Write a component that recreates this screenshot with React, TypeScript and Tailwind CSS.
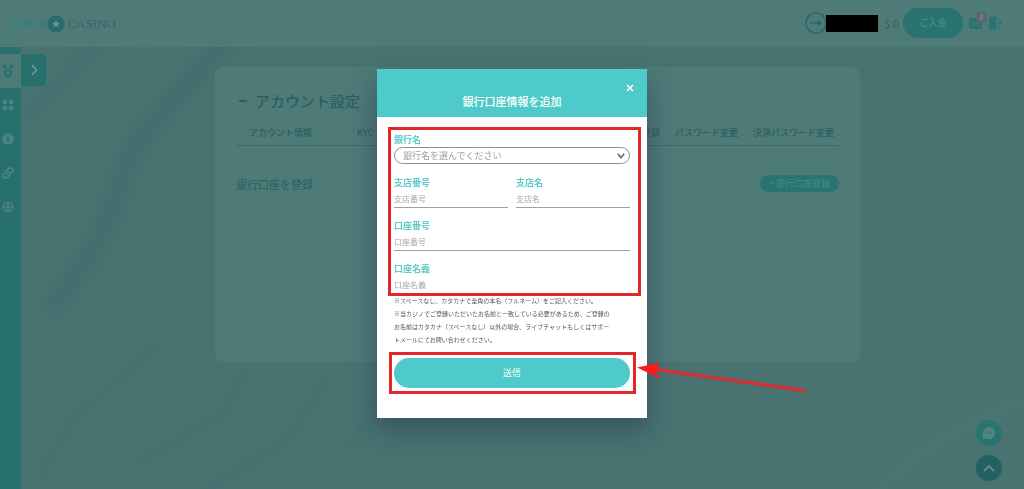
import { useState } from "react";
import type { IconType } from "react-icons";
import { FaGlobe, FaInfoCircle, FaLink, FaMedal } from "react-icons/fa";
import { BsFillGridFill } from "react-icons/bs";

const SIDE_LINKS: { label: string; icon: IconType }[] = [
  { label: "ゲーム", icon: BsFillGridFill },
  { label: "インフォメーション", icon: FaInfoCircle },
  { label: "アフィリエイト", icon: FaLink },
  { label: "言語", icon: FaGlobe },
];

const LEFT_TABS = ["アカウント情報", "KYC"];
const RIGHT_TABS = ["銀行口座登録", "パスワード変更", "決済パスワード変更"];

const NOTES = [
  "※スペースなし、カタカナで全角の本名（フルネーム）をご記入ください。",
  "※当カジノでご登録いただいたお名前と一致している必要があるため、ご登録の",
  "お名前はカタカナ（スペースなし）以外の場合、ライブチャットもしくはサポー",
  "トメールにてお問い合わせください。",
];

function Marble() {
  return (
    <svg
      aria-hidden="true"
      viewBox="0 0 1024 442"
      preserveAspectRatio="none"
      className="absolute inset-0 h-full w-full"
      fill="none"
    >
      <defs>
        <filter id="soft" x="-20%" y="-20%" width="140%" height="140%">
          <feGaussianBlur stdDeviation="7" />
        </filter>
        <filter id="vein" x="-20%" y="-20%" width="140%" height="140%">
          <feGaussianBlur stdDeviation="3" />
        </filter>
      </defs>
      <g filter="url(#soft)" stroke="#40696a" opacity="0.5">
        <path d="M100 -10 C70 30 50 50 25 70" strokeWidth="10" />
        <path d="M230 -10 C190 40 135 80 122 130 S90 210 50 265" strokeWidth="20" />
      </g>
      <g filter="url(#vein)" stroke="#40696a" opacity="0.4">
        <path d="M160 295 L70 375 L40 430" strokeWidth="5" />
        <path d="M245 325 L225 365 L140 415" strokeWidth="5" />
        <path d="M330 325 L290 390 L205 445" strokeWidth="6" />
        <path d="M385 345 L350 400" strokeWidth="5" />
      </g>
      <g filter="url(#soft)" stroke="#4d7876" opacity="0.4">
        <path d="M150 -10 C120 50 80 90 25 170" strokeWidth="10" />
        <path d="M1030 350 C960 380 920 400 870 450" strokeWidth="20" />
      </g>
    </svg>
  );
}

function Logo() {
  return (
    <a href="#" className="flex items-center gap-[2px] font-['Liberation_Serif',serif] text-[13px] leading-4">
      <span className="text-[#278480]">YOUS</span>
      <svg viewBox="0 0 18 18" className="h-[18px] w-[18px]">
        <circle cx="9" cy="9" r="8.5" fill="#28686a" />
        <circle cx="9" cy="9" r="6.4" fill="none" stroke="#3a7d7b" strokeWidth="0.6" />
        <path d="M9 5 L10.2 7.6 L13 8 L11 9.9 L11.5 12.7 L9 11.3 L6.5 12.7 L7 9.9 L5 8 L7.8 7.6 Z" fill="#5d9793" />
      </svg>
      <span className="text-[#45606a]">CASINO</span>
    </a>
  );
}

function TopBar() {
  return (
    <header className="relative z-10 flex h-[47px] items-center justify-between bg-[#4e7a78] pl-[10px] pr-[22px]">
      <Logo />
      <div className="flex items-center pb-px">
        <svg viewBox="0 0 22 22" className="h-[22px] w-[22px]" fill="none" stroke="#2f6668">
          <circle cx="11" cy="11" r="10" strokeWidth="1.6" />
          <path d="M5 11 h7" strokeWidth="1.4" />
          <circle cx="14" cy="11" r="2.2" fill="#2f6668" stroke="none" />
        </svg>
        <div className="-ml-px h-[17px] w-[52px] bg-black" />
        <span className="ml-[6px] text-[11px] leading-4 text-[#2f5f60]">$ 0</span>
        <button type="button" className="ml-1 h-[30px] w-[60px] rounded-full bg-[#297370] text-[9px] text-[#5b918e]">
          ご入金
        </button>
        <button type="button" aria-label="メッセージ" className="relative ml-[6px]">
          <svg viewBox="0 0 13 11" className="h-[11px] w-[13px]">
            <rect width="13" height="11" rx="1" fill="#297370" />
            <path d="M2 3 L6.500 6.500 L11 3 M2 8.500 L4.500 6 M11 8.500 L8.500 6" fill="none" stroke="#4e7a78" />
          </svg>
          <span className="absolute -right-[5px] -top-[6px] flex h-[11px] w-[11px] items-center justify-center rounded-full bg-[#5f6273] text-[7px] leading-none text-[#8aa0a5]">
            0
          </span>
        </button>
        <button type="button" aria-label="ログアウト" className="ml-[7px]">
          <svg viewBox="0 0 13 14" className="h-[14px] w-[13px]" fill="#297370">
            <path d="M0 1.500 L7 0 V14 L0 12.500 Z" />
            <path d="M7 2 H10 V4.500 H9 V3 H7 Z M7 11 H9 V9.500 H10 V12 H7 Z" />
            <path d="M8.500 6.300 H11 V5 L13 7 L11 9 V7.700 H8.500 Z" />
          </svg>
        </button>
      </div>
    </header>
  );
}

function SideBar() {
  return (
    <aside className="relative z-10 w-[21px] shrink-0 bg-[#27706c] pt-[7px]">
      <nav className="flex flex-col">
        <a href="#" aria-label="VIP" className="flex h-[34px] items-center justify-center bg-[#4e7a78] pr-[5px]">
          <FaMedal className="h-3 w-3 text-[#27706c]" />
        </a>
        {SIDE_LINKS.map(({ label, icon: Icon }) => (
          <a key={label} href="#" aria-label={label} className="flex h-[34px] items-center justify-center pr-[5px]">
            <Icon className="h-3 w-3 text-[#4a8380]" />
          </a>
        ))}
      </nav>
      <button
        type="button"
        aria-label="メニューを開く"
        className="absolute left-full top-[7px] flex h-8 w-[25px] items-center justify-center rounded-r-[4px] bg-[#27706c]"
      >
        <svg viewBox="0 0 8 12" className="h-3 w-2" fill="none" stroke="#6f9c99" strokeWidth="1.6">
          <path d="M2 1 L6.500 6 L2 11" />
        </svg>
      </button>
    </aside>
  );
}

function AccountCard() {
  return (
    <section className="relative min-h-[295px] rounded-lg bg-[#4e7a78] px-[21px] pt-[23px] text-[#2f5f60]">
      <h1 className="flex items-center gap-2 pl-[3px] text-[15px] font-medium leading-[22px]">
        <span className="h-[2px] w-2 bg-[#2f5f60]" />
        アカウント設定
      </h1>
      <nav className="mt-[13px] flex justify-between border-b border-[#3c6a69] pb-1 pl-[13px] pr-[5px] text-[9px] font-medium leading-4">
        <div className="flex gap-[45px]">
          {LEFT_TABS.map((tab) => (
            <a key={tab} href="#">
              {tab}
            </a>
          ))}
        </div>
        <div className="flex gap-[15px]">
          {RIGHT_TABS.map((tab) => (
            <a key={tab} href="#">
              {tab}
            </a>
          ))}
        </div>
      </nav>
      <div className="mt-[29px] flex items-center justify-between">
        <h2 className="text-[11px] leading-4">銀行口座を登録</h2>
        <button type="button" className="h-[17px] w-[79px] rounded-full bg-[#297370] text-[9px] leading-none text-[#4b8885]">
          + 銀行口座登録
        </button>
      </div>
    </section>
  );
}

function TextField({ id, label }: { id: string; label: string }) {
  const [value, setValue] = useState("");
  return (
    <div className="flex min-w-0 flex-1 flex-col">
      <label htmlFor={id} className="text-[9px] font-bold leading-3 text-[#5fcbc8]">
        {label}
      </label>
      <input
        id={id}
        type="text"
        value={value}
        placeholder={label}
        onChange={(e) => setValue(e.target.value)}
        className="h-[19px] w-full border-b border-[#a0a0a0] text-[8px] text-[#555] outline-none placeholder:text-[#a8a8a8]"
      />
    </div>
  );
}

function BankModal() {
  return (
    <div
      role="dialog"
      aria-modal="true"
      aria-labelledby="bank-title"
      className="relative w-[270px] bg-white shadow-[0_12px_24px_0_rgba(50,74,86,0.75)]"
    >
      <div className="relative flex h-12 items-end justify-center bg-[#4ecaca] pb-2 text-white">
        <h2 id="bank-title" className="text-[11px] font-medium leading-4">
          銀行口座情報を追加
        </h2>
        <button type="button" aria-label="閉じる" className="absolute right-[13px] top-[15px]">
          <svg viewBox="0 0 8 8" className="h-2 w-2" stroke="white" strokeWidth="1.6">
            <path d="M1 1 L7 7 M7 1 L1 7" />
          </svg>
        </button>
      </div>

      <form className="px-[17px] pb-[30px] pt-[17px]" onSubmit={(e) => e.preventDefault()}>
        <div className="flex flex-col gap-3">
          <div className="flex flex-col">
            <label htmlFor="bank" className="text-[9px] font-bold leading-3 text-[#5fcbc8]">
              銀行名
            </label>
            <div className="relative my-px">
              <select
                id="bank"
                defaultValue=""
                className="block h-[17px] w-full appearance-none rounded-full border border-[#8f8f8f] bg-white pl-2 text-[9px] leading-none text-[#a0a0a0] outline-none"
              >
                <option value="">銀行名を選んでください</option>
              </select>
              <svg
                viewBox="0 0 8 6"
                className="pointer-events-none absolute right-[5px] top-[6px] h-[6px] w-2"
                fill="none"
                stroke="#6f6f6f"
                strokeWidth="1.7"
              >
                <path d="M0.800 0.800 L4 4.600 L7.200 0.800" />
              </svg>
            </div>
          </div>
          <div className="flex gap-2">
            <TextField id="branch-code" label="支店番号" />
            <TextField id="branch-name" label="支店名" />
          </div>
          <TextField id="account-number" label="口座番号" />
          <TextField id="account-holder" label="口座名義" />
        </div>
        <p className="whitespace-nowrap text-[6px] leading-[13px] text-[#555]">
          {NOTES.map((line) => (
            <span key={line} className="block">
              {line}
            </span>
          ))}
        </p>
        <button type="submit" className="mt-3 block h-[30px] w-full rounded-full bg-[#4ecaca] text-[9px] text-white">
          送信
        </button>
      </form>

      {/* guide marks: form fields, submit button, pointer */}
      <div className="pointer-events-none absolute left-[11px] top-[58px] h-[169px] w-[253px] border-3 border-[#e3262a]" />
      <div className="pointer-events-none absolute left-[12px] top-[283px] h-[42px] w-[247px] border-3 border-[#e3262a]" />
      <svg viewBox="0 0 172 34" className="pointer-events-none absolute left-[259px] top-[291px] h-[34px] w-[172px]">
        <path d="M16 9 L169 30.500" stroke="#d23233" strokeWidth="3.400" />
        <path d="M1 7.500 L24.500 2.500 L20 10 L23 18 Z" fill="#ff1a1a" />
      </svg>
    </div>
  );
}

export default function App() {
  return (
    <div lang="ja" className="flex min-h-screen flex-col bg-[#487371] font-['Noto_Sans_CJK_JP',sans-serif]">
      <TopBar />
      <div className="relative flex flex-1">
        <Marble />
        <SideBar />
        <main className="relative min-w-0 flex-1 pl-[194px] pr-[164px] pt-5">
          <AccountCard />
        </main>
      </div>

      <div className="fixed bottom-2 right-[22px] flex flex-col gap-[9px]">
        <button type="button" aria-label="チャット" className="flex h-[26px] w-[26px] items-center justify-center rounded-full bg-[#297370]">
          <svg viewBox="0 0 12 12" className="h-3 w-3">
            <path d="M6 0 A6 6 0 1 1 3.500 11.400 L0 12 V6 A6 6 0 0 1 6 0 Z" fill="#4e8582" />
            <g fill="#297370">
              <circle cx="3.500" cy="6" r="0.800" />
              <circle cx="6" cy="6" r="0.800" />
              <circle cx="8.500" cy="6" r="0.800" />
            </g>
          </svg>
        </button>
        <button type="button" aria-label="上へ" className="flex h-[26px] w-[26px] items-center justify-center rounded-full bg-[#236064]">
          <svg viewBox="0 0 12 8" className="h-2 w-3" fill="none" stroke="#5a8f8d" strokeWidth="2">
            <path d="M1 7 L6 2 L11 7" />
          </svg>
        </button>
      </div>

      <div className="pointer-events-none fixed inset-0 z-20 flex items-start justify-center pt-[69px]">
        <div className="pointer-events-auto">
          <BankModal />
        </div>
      </div>
    </div>
  );
}
